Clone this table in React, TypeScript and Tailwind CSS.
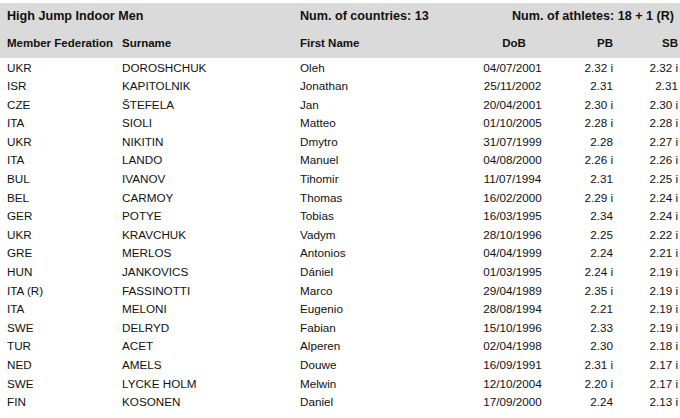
const athletes = [
  ['UKR', 'DOROSHCHUK', 'Oleh', '04/07/2001', '2.32 i', '2.32 i'],
  ['ISR', 'KAPITOLNIK', 'Jonathan', '25/11/2002', '2.31', '2.31'],
  ['CZE', 'ŠTEFELA', 'Jan', '20/04/2001', '2.30 i', '2.30 i'],
  ['ITA', 'SIOLI', 'Matteo', '01/10/2005', '2.28 i', '2.28 i'],
  ['UKR', 'NIKITIN', 'Dmytro', '31/07/1999', '2.28', '2.27 i'],
  ['ITA', 'LANDO', 'Manuel', '04/08/2000', '2.26 i', '2.26 i'],
  ['BUL', 'IVANOV', 'Tihomir', '11/07/1994', '2.31', '2.25 i'],
  ['BEL', 'CARMOY', 'Thomas', '16/02/2000', '2.29 i', '2.24 i'],
  ['GER', 'POTYE', 'Tobias', '16/03/1995', '2.34', '2.24 i'],
  ['UKR', 'KRAVCHUK', 'Vadym', '28/10/1996', '2.25', '2.22 i'],
  ['GRE', 'MERLOS', 'Antonios', '04/04/1999', '2.24', '2.21 i'],
  ['HUN', 'JANKOVICS', 'Dániel', '01/03/1995', '2.24 i', '2.19 i'],
  ['ITA (R)', 'FASSINOTTI', 'Marco', '29/04/1989', '2.35 i', '2.19 i'],
  ['ITA', 'MELONI', 'Eugenio', '28/08/1994', '2.21', '2.19 i'],
  ['SWE', 'DELRYD', 'Fabian', '15/10/1996', '2.33', '2.19 i'],
  ['TUR', 'ACET', 'Alperen', '02/04/1998', '2.30', '2.18 i'],
  ['NED', 'AMELS', 'Douwe', '16/09/1991', '2.31 i', '2.17 i'],
  ['SWE', 'LYCKE HOLM', 'Melwin', '12/10/2004', '2.20 i', '2.17 i'],
  ['FIN', 'KOSONEN', 'Daniel', '17/09/2000', '2.24', '2.13 i'],
];

const cols = 'grid grid-cols-[115px_178px_170px_85px_58px_65px]';

export default function App() {
  return (
    <div className="h-[418px] w-[680px] overflow-hidden bg-white pt-[3px] text-[#111] [font-family:'Liberation_Sans',Arial,sans-serif]">
      <div className="bg-[#dadada] pl-[7px] pr-[2px] font-bold">
        <div className="flex h-[26px] items-center whitespace-nowrap text-[12.6px]">
          <span className="w-[293px]">High Jump Indoor Men</span>
          <span>Num. of countries: 13</span>
          <span className="ml-auto pr-[4px]">Num. of athletes: 18 + 1 (R)</span>
        </div>
        <div className={`${cols} h-[29px] items-center text-[11.5px]`}>
          <span>Member Federation</span>
          <span>Surname</span>
          <span>First Name</span>
          <span className="pl-[3px] text-center">DoB</span>
          <span className="text-right">PB</span>
          <span className="text-right">SB</span>
        </div>
      </div>
      <div className="pl-[7px] pr-[2px] text-[11.7px]">
        {athletes.map((a, i) => (
          <div key={i} className={`${cols} h-[18.6px] items-center`}>
            <span>{a[0]}</span>
            <span>{a[1]}</span>
            <span>{a[2]}</span>
            <span className="text-center">{a[3]}</span>
            <span className="text-right">{a[4]}</span>
            <span className="text-right">{a[5]}</span>
          </div>
        ))}
      </div>
    </div>
  );
}
